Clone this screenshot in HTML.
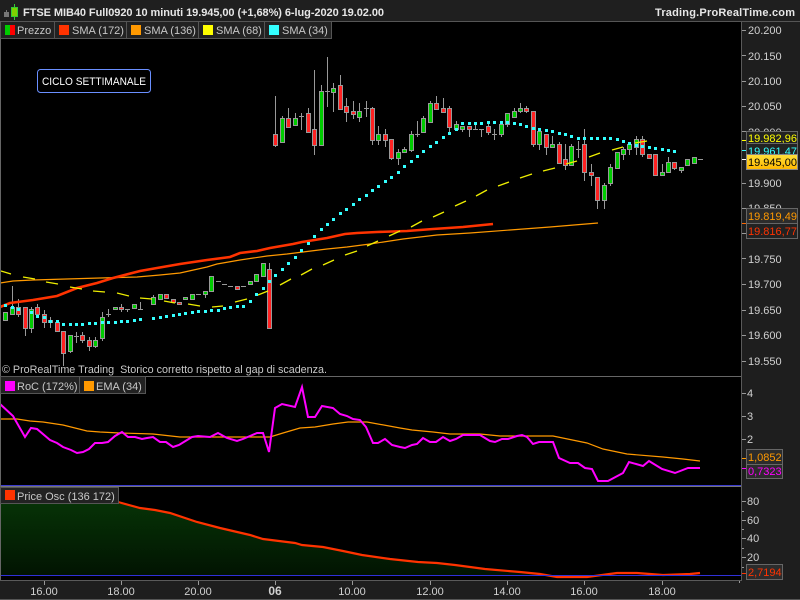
<!DOCTYPE html>
<html><head><meta charset="utf-8"><style>
html,body{margin:0;padding:0;background:#000;width:800px;height:600px;overflow:hidden}
svg{display:block;position:absolute;left:0;top:0}
text{font-family:"Liberation Sans",sans-serif;font-size:11px}
.a{fill:#d0d0d0}
.t{font-weight:bold;fill:#e6e6e6;font-size:11px}
.l{fill:#c8c8c8}
</style></head><body>
<svg width="800" height="600" viewBox="0 0 800 600" xmlns="http://www.w3.org/2000/svg">
<defs>
<linearGradient id="g" x1="0" y1="0" x2="0" y2="1"><stop offset="0" stop-color="#063206"/><stop offset="1" stop-color="#021402"/></linearGradient>
<linearGradient id="y" x1="0" y1="0" x2="0" y2="1"><stop offset="0" stop-color="#ffe03a"/><stop offset="1" stop-color="#ffb800"/></linearGradient>
</defs>
<rect width="800" height="600" fill="#000"/>
<!-- price SMA 136 -->
<path d="M0 283L13 281L33 280L100 278L137 277L160 275L180 273L207 267L217 264L240 260L267 256L287 254L327 249L347 247L370 244L403 239L437 235L470 233L510 230L550 227L598 223" fill="none" stroke="#f90" stroke-width="1.2"/>
<!-- wicks -->
<path fill="none" stroke="#999" d="M12.5 286V314M18.5 299V317M25.5 307V336M31.5 307V333M37.5 304V317M44.5 310V328M50.5 317V328M57.5 320V331M63.5 331V366M70.5 335V353M76.5 332V343M82.5 332V343M89.5 337V351M95.5 337V348M102.5 312V341M108.5 309V317M121.5 304V312M127.5 309V312M140.5 302V309M153.5 295V304M205.5 291V298M211.5 276V291M263.5 263V276M269.5 263V328M275.5 96V147M282.5 116V142M288.5 108V127M295.5 113V125M301.5 113V130M308.5 108V132M314.5 70V155M321.5 85V145M327.5 57V107M333.5 83V112M340.5 75V109M346.5 98V122M353.5 101V119M359.5 103V122M366.5 101V117M372.5 107V145M378.5 126V145M385.5 129V147M391.5 139V160M398.5 149V165M404.5 147V153M411.5 131V152M417.5 121V137M423.5 116V132M430.5 101V122M436.5 96V109M443.5 98V113M449.5 106V132M456.5 121V131M462.5 126V132M469.5 126V137M475.5 125V130M481.5 129V137M488.5 124V135M494.5 129V140M501.5 124V137M507.5 113V127M514.5 108V117M520.5 103V113M526.5 106V113M533.5 111V147M539.5 128V150M546.5 134V155M552.5 136V147M559.5 142V163M565.5 144V170M571.5 144V165M578.5 141V158M584.5 129V181M591.5 164V186M597.5 177V209M604.5 183V209M610.5 164V186M617.5 152V168M623.5 147V160M629.5 142V155M636.5 136V155M642.5 136V157M649.5 154V158M662.5 164V175M668.5 157V172M674.5 162V170M681.5 167V173"/>
<!-- dojis -->
<path fill="none" stroke="#999" d="M74 336.5h5M106 314.5h5M125 309.5h5M138 309.5h5M196 294.5h5M216 281.5h5M222 284.5h5M228 286.5h5M241 286.5h5M299 116.5h5M325 91.5h5M364 108.5h5M415 134.5h5M473 129.5h5M479 129.5h5M492 134.5h5M576 149.5h5M698 159.5h5"/>
<!-- green bodies -->
<path fill="#0c0" stroke="#999" d="M3.5 312.5h4v8h-4zM10.5 307.5h4v7h-4zM29.5 309.5h4v19h-4zM68.5 335.5h4v16h-4zM93.5 340.5h4v6h-4zM100.5 317.5h4v21h-4zM113.5 307.5h4v2h-4zM132.5 304.5h4v4h-4zM151.5 297.5h4v7h-4zM158.5 294.5h4v5h-4zM183.5 297.5h4v2h-4zM190.5 294.5h4v5h-4zM203.5 291.5h4v3h-4zM209.5 276.5h4v15h-4zM248.5 281.5h4v3h-4zM254.5 274.5h4v7h-4zM261.5 263.5h4v13h-4zM280.5 118.5h4v24h-4zM293.5 118.5h4v7h-4zM319.5 91.5h4v54h-4zM331.5 88.5h4v4h-4zM357.5 111.5h4v6h-4zM376.5 134.5h4v6h-4zM396.5 152.5h4v6h-4zM402.5 149.5h4v3h-4zM409.5 134.5h4v16h-4zM421.5 118.5h4v14h-4zM428.5 103.5h4v19h-4zM454.5 124.5h4v5h-4zM460.5 126.5h4v3h-4zM499.5 124.5h4v10h-4zM505.5 113.5h4v11h-4zM512.5 111.5h4v6h-4zM518.5 108.5h4v3h-4zM537.5 131.5h4v13h-4zM550.5 144.5h4v3h-4zM569.5 146.5h4v19h-4zM602.5 185.5h4v15h-4zM608.5 167.5h4v16h-4zM615.5 152.5h4v16h-4zM621.5 149.5h4v5h-4zM627.5 144.5h4v5h-4zM634.5 139.5h4v8h-4zM660.5 172.5h4v3h-4zM666.5 162.5h4v10h-4zM679.5 167.5h4v3h-4zM685.5 159.5h4v6h-4zM692.5 157.5h4v6h-4z"/>
<!-- red bodies -->
<path fill="#f22" stroke="#999" d="M16.5 307.5h4v7h-4zM23.5 307.5h4v21h-4zM35.5 307.5h4v7h-4zM42.5 314.5h4v8h-4zM48.5 320.5h4v2h-4zM55.5 322.5h4v9h-4zM61.5 331.5h4v22h-4zM80.5 335.5h4v5h-4zM87.5 340.5h4v6h-4zM119.5 307.5h4v2h-4zM164.5 294.5h4v4h-4zM171.5 299.5h4v3h-4zM177.5 302.5h4v2h-4zM235.5 286.5h4v3h-4zM267.5 269.5h4v59h-4zM273.5 134.5h4v11h-4zM286.5 118.5h4v9h-4zM306.5 113.5h4v19h-4zM312.5 129.5h4v16h-4zM338.5 85.5h4v24h-4zM344.5 106.5h4v6h-4zM351.5 111.5h4v3h-4zM370.5 108.5h4v32h-4zM383.5 134.5h4v6h-4zM389.5 139.5h4v19h-4zM434.5 103.5h4v6h-4zM441.5 108.5h4v4h-4zM447.5 108.5h4v19h-4zM467.5 126.5h4v3h-4zM486.5 126.5h4v6h-4zM524.5 108.5h4v3h-4zM531.5 111.5h4v33h-4zM544.5 134.5h4v13h-4zM557.5 144.5h4v19h-4zM563.5 159.5h4v6h-4zM582.5 144.5h4v28h-4zM589.5 172.5h4v3h-4zM595.5 177.5h4v23h-4zM640.5 139.5h4v15h-4zM647.5 154.5h4v4h-4zM653.5 154.5h4v21h-4zM672.5 162.5h4v6h-4z"/>
<!-- SMA 172 -->
<path d="M0 307L10 303L33 300L57 296L77 288L97 283L113 278L140 271L157 268L180 264L207 260L230 257L240 253L257 251L270 248L293 244L302 242L327 238L345 234L357 233L377 232L407 231L433 229L463 227L493 224" fill="none" stroke="#f30" stroke-width="2.6"/>
<!-- SMA 68 -->
<path fill="none" stroke="#ee0" stroke-width="1.3" d="M1 271L11 274M23 277L35 279M46 282L58 284M70 287L82 289M93 291L105 292M117 293L129 296M140 298L152 299M164 301L175 303M188 304L200 306M212 307L223 306M235 302L247 299M258 295L268 291M280 285L291 279M301 275L312 269M323 265L334 260M345 255L357 251M367 246L378 241M389 236L400 231M411 227L422 221M433 217L444 212M455 206L466 201M476 196L487 190M498 186L509 182M520 178L532 174M543 171L555 168M566 164L577 161M589 157L600 153M612 150L623 147M635 143L647 141"/>
<!-- SMA 34 -->
<path fill="none" stroke="#3ff" stroke-width="3" d="M4 305.5h3M11 307.5h3M17 309.5h3M30 312.5h3M36 316.5h3M43 317.5h3M49 321.5h3M56 321.5h3M62 324.5h3M69 324.5h3M75 324.5h3M81 324.5h3M88 323.5h3M94 323.5h3M101 322.5h3M107 322.5h3M114 322.5h3M120 321.5h3M126 321.5h3M133 320.5h3M139 319.5h3M152 318.5h3M159 317.5h3M165 316.5h3M172 315.5h3M178 314.5h3M184 313.5h3M191 312.5h3M197 311.5h3M204 311.5h3M210 310.5h3M217 310.5h3M223 308.5h3M229 307.5h3M236 306.5h3M242 306.5h3M249 301.5h3M255 294.5h3M262 288.5h3M268 281.5h3M274 275.5h3M281 269.5h3M287 263.5h3M294 257.5h3M300 250.5h3M307 243.5h3M313 236.5h3M320 229.5h3M326 224.5h3M332 219.5h3M339 213.5h3M345 209.5h3M352 204.5h3M358 199.5h3M365 195.5h3M371 190.5h3M377 186.5h3M384 181.5h3M390 177.5h3M397 172.5h3M403 166.5h3M410 161.5h3M416 156.5h3M422 151.5h3M429 146.5h3M435 142.5h3M442 137.5h3M448 133.5h3M455 129.5h3M461 123.5h3M468 123.5h3M474 123.5h3M480 123.5h3M487 122.5h3M493 122.5h3M500 122.5h3M506 122.5h3M513 123.5h3M519 124.5h3M525 126.5h3M532 128.5h3M538 129.5h3M545 130.5h3M551 131.5h3M558 133.5h3M564 134.5h3M570 136.5h3M577 138.5h3M583 138.5h3M590 138.5h3M596 138.5h3M603 138.5h3M609 138.5h3M616 139.5h3M622 141.5h3M628 143.5h3M635 145.5h3M641 146.5h3M648 147.5h3M654 148.5h3M661 149.5h3M667 150.5h3M673 151.5h3"/>
<!-- annotation -->
<rect x="37.5" y="69.5" width="113" height="23" rx="3" fill="#000" stroke="#6a8fff"/>
<text x="42" y="85" fill="#fff" textLength="104" lengthAdjust="spacingAndGlyphs">CICLO SETTIMANALE</text>
<text x="2" y="373" fill="#c8c8c8" xml:space="preserve" textLength="325" lengthAdjust="spacingAndGlyphs">© ProRealTime Trading  Storico corretto rispetto al gap di scadenza.</text>
<!-- RoC panel -->
<path d="M0 419L17 419L30 421L43 422L63 425L87 431L100 432L120 433L153 434L180 437L270 437L283 433L300 428L315 427L333 424L348 422L367 422L400 428L412 430L433 432L450 434L480 434L500 436L553 436L587 443L603 449L627 454L663 457L683 459L700 461" fill="none" stroke="#f90" stroke-width="1.2"/>
<path d="M0 404L13 416L25 437L31 428L37 429L50 440L57 443L63 447L71 450L77 453L83 452L89 449L95 443L102 443L108 442L115 436L122 432L128 437L135 437L142 439L147 438L153 437L160 442L166 442L173 447L179 445L192 437L198 436L210 437L218 433L227 438L237 441L243 439L250 436L257 433L263 433L269 452L275 408L282 404L295 407L302 387L308 417L315 417L322 406L333 408L340 414L347 416L353 419L360 420L366 427L373 443L378 443L385 439L392 445L400 447L405 448L412 445L417 444L423 438L430 442L436 442L443 437L450 441L456 439L463 435L480 435L490 441L495 442L502 439L508 439L517 436L522 435L527 437L533 444L539 442L553 442L559 458L570 463L578 463L585 468L592 469L598 481L608 481L623 473L629 462L643 466L649 461L662 469L675 473L688 468L700 468" fill="none" stroke="#f0f" stroke-width="2"/>
<!-- Osc panel -->
<path d="M0 504H122L140 508L155 510L170 513L197 522L220 528L250 535L263 539L295 543L302 545L323 547L343 551L362 555L390 559L418 562L437 563L455 565L485 569L520 572L540 574V575H0Z" fill="url(#g)"/>
<path d="M118 502L140 508L155 510L170 513L197 522L220 528L250 535L263 539L295 543L302 545L323 547L343 551L362 555L390 559L418 562L437 563L455 565L485 569L520 572L540 574L557 577L587 577L617 573L637 573L663 575L690 574L700 573" fill="none" stroke="#f30" stroke-width="2.2"/>
<!-- separators -->
<rect x="0" y="376" width="741" height="1" fill="#666"/>
<rect x="0" y="485" width="741" height="1" fill="#3a3ad0"/>
<rect x="0" y="486" width="741" height="1" fill="#777"/>
<rect x="0" y="575" width="741" height="1" fill="#3030d8"/>
<rect x="0" y="21" width="1" height="559" fill="#666"/>
<!-- right axis -->
<rect x="741" y="21" width="59" height="579" fill="#1e1e1e"/>
<rect x="741" y="21" width="1" height="560" fill="#5a5a5a"/>
<path stroke="#999" fill="none" d="M742 30.5h4M742 55.5h4M742 81.5h4M742 106.5h4M742 131.5h4M742 183.5h4M742 208.5h4M742 233.5h4M742 258.5h4M742 284.5h4M742 310.5h4M742 335.5h4M742 361.5h4M742 393.5h4M742 416.5h4M742 439.5h4M742 501.5h4M742 511.5h2M742 520.5h4M742 529.5h2M742 538.5h4M742 548.5h2M742 557.5h4M742 567.5h2"/>
<g class="a">
<text class="a" x="748" y="34">20.200</text>
<text class="a" x="748" y="60">20.150</text>
<text class="a" x="748" y="85">20.100</text>
<text class="a" x="748" y="110">20.050</text>
<text class="a" x="748" y="136">20.000</text>
<text class="a" x="748" y="187">19.900</text>
<text class="a" x="748" y="212">19.850</text>
<text class="a" x="748" y="263">19.750</text>
<text class="a" x="748" y="288">19.700</text>
<text class="a" x="748" y="314">19.650</text>
<text class="a" x="748" y="339">19.600</text>
<text class="a" x="748" y="365">19.550</text>
<text class="a" x="747" y="397">4</text>
<text class="a" x="747" y="420">3</text>
<text class="a" x="747" y="443">2</text>
<text class="a" x="747" y="505">80</text>
<text class="a" x="747" y="524">60</text>
<text class="a" x="747" y="542">40</text>
<text class="a" x="747" y="561">20</text>
</g>
<!-- value boxes -->
<rect x="742" y="140" width="4" height="1" fill="#ff0"/>
<rect x="742" y="150" width="4" height="1" fill="#3ff"/>
<rect x="742" y="159" width="4" height="1" fill="#fff"/>
<rect x="742" y="223" width="4" height="1" fill="#f60"/>
<rect x="742" y="458" width="4" height="1" fill="#f90"/>
<rect x="742" y="468" width="4" height="1" fill="#f0f"/>
<rect x="742" y="573" width="4" height="1" fill="#f30"/>
<rect x="746.5" y="131.5" width="51" height="12" fill="#222" stroke="#666"/>
<text x="748" y="142" fill="#ff0">19.982,96</text>
<rect x="746.5" y="143.5" width="51" height="12" fill="#222" stroke="#666"/>
<text x="748" y="155" fill="#3ff">19.961,47</text>
<rect x="746.5" y="154.5" width="51" height="15" fill="url(#y)" stroke="#888"/>
<text x="748" y="166" fill="#000">19.945,00</text>
<rect x="746.5" y="208.5" width="51" height="15" fill="#2c2c2c" stroke="#666"/>
<text x="748" y="220" fill="#f90">19.819,49</text>
<rect x="746.5" y="223.5" width="51" height="15" fill="#222" stroke="#666"/>
<text x="748" y="235" fill="#f30">19.816,77</text>
<rect x="746.5" y="449.5" width="36" height="15" fill="#2c2c2c" stroke="#666"/>
<text x="748" y="461" fill="#f90">1,0852</text>
<rect x="746.5" y="464.5" width="36" height="14" fill="#2c2c2c" stroke="#666"/>
<text x="748" y="475" fill="#f0f">0,7323</text>
<rect x="746.5" y="564.5" width="36" height="15" fill="#2c2c2c" stroke="#666"/>
<text x="748" y="576" fill="#f30">2,7194</text>
<!-- bottom axis -->
<rect x="0" y="580" width="800" height="20" fill="#1e1e1e"/>
<rect x="0" y="580" width="742" height="1" fill="#5a5a5a"/>
<rect x="0" y="599" width="800" height="1" fill="#555"/>
<path stroke="#999" fill="none" d="M44.5 581v4M121.5 581v4M198.5 581v4M275.5 581v4M352.5 581v4M430.5 581v4M507.5 581v4M584.5 581v4M662.5 581v4M739.5 581v2"/>
<g text-anchor="middle">
<text class="a" x="44" y="595">16.00</text>
<text class="a" x="121" y="595">18.00</text>
<text class="a" x="198" y="595">20.00</text>
<text class="a" x="275" y="595" font-weight="bold" style="font-size:12px">06</text>
<text class="a" x="352" y="595">10.00</text>
<text class="a" x="430" y="595">12.00</text>
<text class="a" x="507" y="595">14.00</text>
<text class="a" x="584" y="595">16.00</text>
<text class="a" x="662" y="595">18.00</text>
</g>
<!-- title -->
<rect x="0" y="0" width="800" height="21" fill="#1f1f1f"/>
<rect x="0" y="21" width="800" height="1" fill="#555"/>
<rect x="4" y="12" width="5" height="5" fill="#777"/>
<path d="M6.5 10V12" stroke="#777"/>
<path d="M14.5 4V20" stroke="#3c3"/>
<rect x="11.5" y="7.5" width="6" height="9" fill="#7fd000" stroke="#3c3"/>
<text class="t" x="23" y="16" xml:space="preserve" textLength="361" lengthAdjust="spacing">FTSE MIB40 Full0920 10 minuti 19.945,00 (+1,68%) 6-lug-2020 19.02.00</text>
<text class="t" x="655" y="16" textLength="140" lengthAdjust="spacing">Trading.ProRealTime.com</text>
<!-- legend -->
<rect x="0.5" y="21.5" width="331" height="17" fill="#222" stroke="#555"/>
<path stroke="#555" d="M54.5 22V38M126.5 22V38M198.5 22V38M264.5 22V38"/>
<rect x="5" y="25" width="5" height="10" fill="#0c0"/><rect x="10" y="25" width="5" height="10" fill="#f00"/>
<text class="l" x="17" y="34">Prezzo</text>
<rect x="59" y="25" width="10" height="10" fill="#f30"/>
<text class="l" x="72" y="34">SMA (172)</text>
<rect x="131" y="25" width="10" height="10" fill="#f90"/>
<text class="l" x="144" y="34">SMA (136)</text>
<rect x="203" y="25" width="10" height="10" fill="#ff0"/>
<text class="l" x="216" y="34">SMA (68)</text>
<rect x="269" y="25" width="10" height="10" fill="#3ff"/>
<text class="l" x="282" y="34">SMA (34)</text>
<rect x="0.5" y="376.5" width="145" height="17" fill="#222" stroke="#555"/>
<path stroke="#555" d="M79.5 377V393"/>
<rect x="5" y="381" width="10" height="10" fill="#f0f"/>
<text class="l" x="17" y="390">RoC (172%)</text>
<rect x="84" y="381" width="10" height="10" fill="#f90"/>
<text class="l" x="96" y="390">EMA (34)</text>
<rect x="0.5" y="487.5" width="118" height="16" fill="#222" stroke="#555"/>
<rect x="5" y="490" width="10" height="10" fill="#f30"/>
<text class="l" x="17" y="500">Price Osc (136 172)</text>
</svg>
</body></html>
